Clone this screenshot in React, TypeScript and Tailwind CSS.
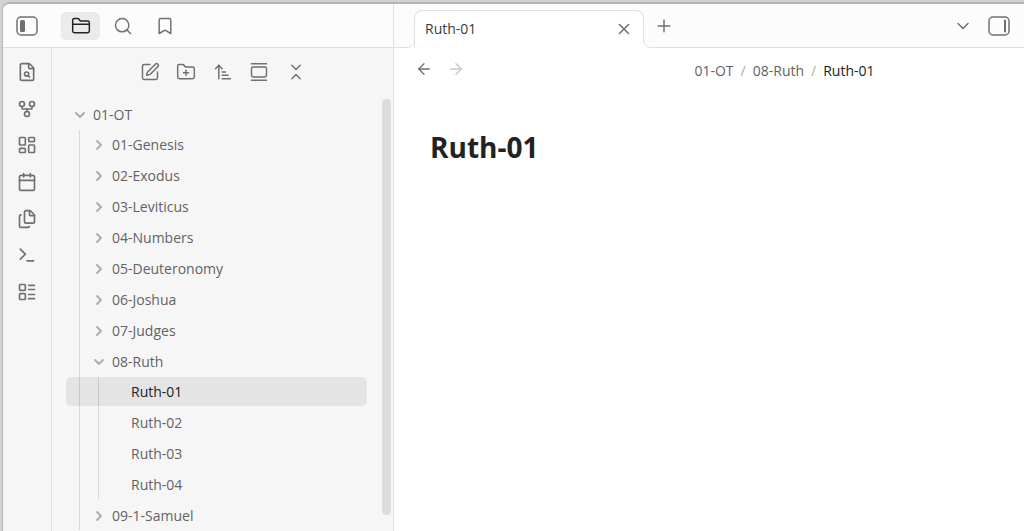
import type { ReactNode } from 'react';
import {
  ArrowLeft,
  ArrowRight,
  ArrowUpNarrowWide,
  Bookmark,
  Calendar,
  ChevronDown,
  ChevronRight,
  ChevronsDownUp,
  Files,
  FileSearch,
  FolderClosed,
  FolderPlus,
  GalleryVertical,
  GitFork,
  LayoutDashboard,
  LayoutList,
  Plus,
  Search,
  SquarePen,
  Terminal,
  X,
} from 'lucide-react';

interface TreeNode {
  name: string;
  children?: TreeNode[];
  open?: boolean;
  active?: boolean;
}

const tree: TreeNode = {
  name: '01-OT',
  open: true,
  children: [
    { name: '01-Genesis', children: [] },
    { name: '02-Exodus', children: [] },
    { name: '03-Leviticus', children: [] },
    { name: '04-Numbers', children: [] },
    { name: '05-Deuteronomy', children: [] },
    { name: '06-Joshua', children: [] },
    { name: '07-Judges', children: [] },
    {
      name: '08-Ruth',
      open: true,
      children: [
        { name: 'Ruth-01', active: true },
        { name: 'Ruth-02' },
        { name: 'Ruth-03' },
        { name: 'Ruth-04' },
      ],
    },
    { name: '09-1-Samuel', children: [] },
  ],
};

const indents = ['pl-[7px]', 'pl-[26px]', 'pl-[45px]'];
const guides = ['before:left-[13px]', 'before:left-[32px]'];

function IconButton({ label, className = '', children }: { label: string; className?: string; children: ReactNode }) {
  return (
    <button type="button" aria-label={label} className={`flex shrink-0 items-center justify-center ${className}`}>
      {children}
    </button>
  );
}

function LeftPanelIcon() {
  return (
    <svg width="22" height="20" viewBox="0 0 22 20" fill="none" stroke="currentColor" strokeWidth="1.5">
      <rect x="1" y="1" width="20" height="18" rx="4" />
      <rect x="4" y="4" width="5" height="12" rx="1.5" fill="currentColor" stroke="none" />
    </svg>
  );
}

function RightPanelIcon() {
  return (
    <svg width="22" height="20" viewBox="0 0 22 20" fill="none" stroke="currentColor" strokeWidth="1.5">
      <rect x="1" y="1" width="20" height="18" rx="4" />
      <path d="M17 4.500v11" strokeWidth="2" strokeLinecap="round" />
    </svg>
  );
}

function TreeItem({ node, depth }: { node: TreeNode; depth: number }) {
  const Chevron = node.open ? ChevronDown : ChevronRight;

  return (
    <li>
      <button
        type="button"
        className={`flex h-[29px] w-full items-center rounded-[5px] text-left ${indents[depth]} ${
          node.active ? 'bg-black/7 text-[#222222]' : 'text-[#636363]'
        }`}
      >
        <span className="mr-[6px] flex w-[14px] justify-center text-[#ababab]">
          {node.children && <Chevron size={16} strokeWidth={2.75} className="shrink-0" />}
        </span>
        {node.name}
      </button>
      {node.open && node.children && (
        <ul
          className={`relative mt-px flex flex-col gap-[2px] before:absolute before:inset-y-0 before:w-px before:bg-black/12 ${guides[depth]}`}
        >
          {node.children.map((child) => (
            <TreeItem key={child.name} node={child} depth={depth + 1} />
          ))}
        </ul>
      )}
    </li>
  );
}

function Ribbon() {
  return (
    <nav className="w-[49px] shrink-0 border-r border-[#e0e0e0] pt-[14px] text-[#707070]">
      <div className="flex h-[240px] flex-col items-center justify-between">
        <IconButton label="Quick switcher"><FileSearch size={20} strokeWidth={2} /></IconButton>
        <IconButton label="Graph view"><GitFork size={20} strokeWidth={2} /></IconButton>
        <IconButton label="Canvas"><LayoutDashboard size={20} strokeWidth={2} /></IconButton>
        <IconButton label="Daily note"><Calendar size={20} strokeWidth={2} /></IconButton>
        <IconButton label="Templates"><Files size={20} strokeWidth={2} /></IconButton>
        <IconButton label="Command palette"><Terminal size={20} strokeWidth={2} /></IconButton>
        <IconButton label="Bases"><LayoutList size={20} strokeWidth={2} /></IconButton>
      </div>
    </nav>
  );
}

function Explorer() {
  return (
    <div className="flex min-w-0 flex-1 flex-col">
      <div className="flex shrink-0 justify-center pt-[14px] text-[#707070]">
        <div className="flex w-[166px] justify-between">
          <IconButton label="New note"><SquarePen size={20} strokeWidth={1.75} /></IconButton>
          <IconButton label="New folder"><FolderPlus size={20} strokeWidth={1.75} /></IconButton>
          <IconButton label="Sort order"><ArrowUpNarrowWide size={20} strokeWidth={1.75} /></IconButton>
          <IconButton label="Auto reveal"><GalleryVertical size={20} strokeWidth={1.75} /></IconButton>
          <IconButton label="Collapse all"><ChevronsDownUp size={20} strokeWidth={1.75} /></IconButton>
        </div>
      </div>
      <div className="flex min-h-0 flex-1 justify-between overflow-hidden pt-[17px] pl-[14px]">
        <ul className="w-[301px] pt-px">
          <TreeItem node={tree} depth={0} />
        </ul>
        <div className="mr-[2px] h-[416px] w-[9px] rounded-full bg-[#dcdcdc]" />
      </div>
    </div>
  );
}

function TabCurve({ flip = false }: { flip?: boolean }) {
  return (
    <svg width="8" height="8" viewBox="0 0 8 8" fill="none" className={`relative top-px shrink-0 self-end ${flip ? '-scale-x-100' : ''}`}>
      <path d="M0 8V7.500A7.500 7.500 0 0 0 7.500 0H8V8Z" fill="#ffffff" />
      <path d="M0 7.500A7.500 7.500 0 0 0 7.500 0" stroke="#e0e0e0" />
    </svg>
  );
}

export default function App() {
  return (
    <div className="h-screen overflow-hidden bg-[#d2d2d2] pt-[2px] pl-[2px] font-['Open_Sans','Noto_Sans',sans-serif] text-[14px]">
      <div className="flex h-full overflow-hidden rounded-tl-[8px] border-t-2 border-l border-[#b4b4b4] bg-white">
        <aside className="flex w-[391px] shrink-0 flex-col border-r border-[#e0e0e0] bg-[#f6f6f6]">
          <header className="flex h-[44px] shrink-0 items-center border-b border-[#e0e0e0] bg-[#fcfcfc] text-[#707070]">
            <IconButton label="Toggle left sidebar" className="w-[48px]"><LeftPanelIcon /></IconButton>
            <div className="ml-[10px] flex items-center gap-[3px]">
              <IconButton label="Files" className="h-[28px] w-[39px] rounded-[5px] bg-[#ebebeb] text-[#222222]">
                <FolderClosed size={20} strokeWidth={1.75} />
              </IconButton>
              <IconButton label="Search" className="h-[28px] w-[39px]"><Search size={20} strokeWidth={1.75} /></IconButton>
              <IconButton label="Bookmarks" className="h-[28px] w-[39px]"><Bookmark size={20} strokeWidth={1.75} /></IconButton>
            </div>
          </header>
          <div className="flex min-h-0 flex-1">
            <Ribbon />
            <Explorer />
          </div>
        </aside>

        <main className="flex min-w-0 flex-1 flex-col">
          <header className="flex h-[44px] shrink-0 border-b border-[#e0e0e0] bg-[#fcfcfc] pl-[13px] text-[#707070]">
            <TabCurve />
            <div className="relative -mx-px -mb-px mt-[6px] flex w-[230px] items-center justify-between rounded-t-[8px] border-x border-t border-[#e0e0e0] bg-white px-[10px] pb-[2px]">
              <span className="text-[#3c3c3c]">Ruth-01</span>
              <IconButton label="Close tab"><X size={18} strokeWidth={2} /></IconButton>
            </div>
            <TabCurve flip />
            <div className="flex flex-1 items-center justify-between pr-[14px] pl-[3px]">
              <IconButton label="New tab"><Plus size={20} strokeWidth={1.75} /></IconButton>
              <div className="flex items-center gap-[15px]">
                <IconButton label="Tab list"><ChevronDown size={20} strokeWidth={1.75} /></IconButton>
                <IconButton label="Toggle right sidebar"><RightPanelIcon /></IconButton>
              </div>
            </div>
          </header>

          <div className="flex h-[44px] shrink-0 items-center pl-[21px]">
            <div className="flex gap-[14px] pb-[2px] text-[#707070]">
              <IconButton label="Back"><ArrowLeft size={18} strokeWidth={1.75} /></IconButton>
              <IconButton label="Forward" className="opacity-40"><ArrowRight size={18} strokeWidth={1.75} /></IconButton>
            </div>
            <nav className="flex flex-1 justify-center gap-[7px] pl-[80px] text-[#636363]">
              <a href="#ot">01-OT</a>
              <span className="text-[#ababab]">/</span>
              <a href="#ruth">08-Ruth</a>
              <span className="text-[#ababab]">/</span>
              <span className="text-[#222222]">Ruth-01</span>
            </nav>
          </div>

          <article className="px-[36px] pt-[35px]">
            <h1 className="text-[28px] leading-[40px] font-bold text-[#222222]">Ruth-01</h1>
          </article>
        </main>
      </div>
    </div>
  );
}
